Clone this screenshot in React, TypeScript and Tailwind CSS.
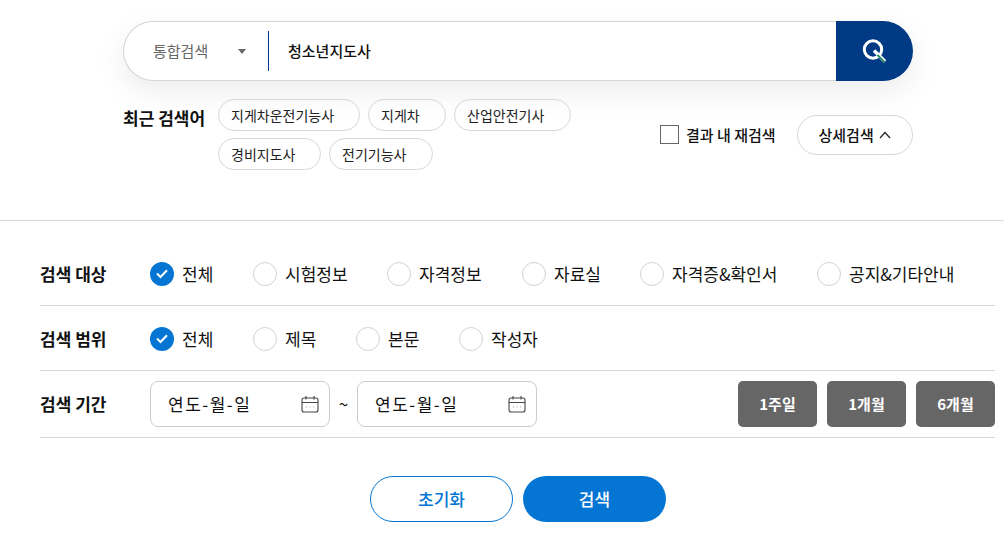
import React from 'react';

const FONT = "font-['Noto_Sans_CJK_KR','Noto_Sans',sans-serif]";

function CalendarIcon() {
  return (
    <svg width="18" height="18" viewBox="0 0 18 18" fill="none" stroke="#444" strokeWidth="1.1">
      <rect x="1" y="3" width="16" height="14" rx="2" />
      <path d="M1 7.5h16M5 1v3.5M13 1v3.5" />
      <path d="M5 12h1M8.5 12h1M12 12h1" stroke="#aaa" />
    </svg>
  );
}

function Radio({ label, checked = false, gapClass }: { label: string; checked?: boolean; gapClass: string }) {
  return (
    <div className={`flex items-center gap-[8px] ${gapClass}`}>
      {checked ? (
        <span className="flex h-6 w-6 items-center justify-center rounded-full bg-[#0475d2]">
          <svg width="14" height="11" viewBox="0 0 14 11" fill="none" stroke="#fff" strokeWidth="2">
            <path d="M2 5.5 5.5 9 12 2.2" />
          </svg>
        </span>
      ) : (
        <span className="h-6 w-6 rounded-full border border-[#d2d2d2] bg-white" />
      )}
      <span className="text-[17px] leading-6 text-[#111]">{label}</span>
    </div>
  );
}

function Tag({ label, w }: { label: string; w: string }) {
  return (
    <span className={`flex h-[32px] items-center rounded-full border border-[#d8d8d8] pl-[12px] text-[14px] text-[#222] ${w}`}>
      {label}
    </span>
  );
}

function DateBox() {
  return (
    <div className="flex h-[46px] w-[180px] items-center justify-between rounded-[8px] border border-[#cccccc] pl-[17px] pr-[10px]">
      <span className="text-[17px] tracking-[1.5px] text-[#111]">연도-월-일</span>
      <CalendarIcon />
    </div>
  );
}

function RangeBtn({ label }: { label: string }) {
  return (
    <span className="flex h-[46px] w-[79px] items-center justify-center rounded-[5px] bg-[#666666] text-[15px] font-bold text-white">
      {label}
    </span>
  );
}

export default function App() {
  return (
    <div className={`h-[539px] w-[1004px] overflow-hidden bg-white ${FONT}`}>
      {/* top search */}
      <div className="mx-[123px] w-[790px] pt-[21px]">
        <div className="flex h-[60px] rounded-full bg-white shadow-[0_10px_30px_rgba(0,0,0,0.08)]">
          <div className="flex flex-1 items-center rounded-l-full border-y border-l border-[#d4d4d4]">
            <div className="flex w-[144px] items-center pl-[29px]">
              <span className="text-[15px] text-[#666]">통합검색</span>
              <span className="ml-[30px] h-0 w-0 border-x-[4px] border-t-[5px] border-x-transparent border-t-[#666]" />
            </div>
            <span className="h-[40px] w-px bg-[#003a85]" />
            <span className="ml-[19px] text-[15px] font-medium text-[#111]">청소년지도사</span>
          </div>
          <div className="flex w-[77px] items-center justify-center rounded-r-full bg-[#003a85] pr-[2px]">
            <svg width="26" height="26" viewBox="0 0 26 26" fill="none">
              <circle cx="12" cy="11.5" r="8.7" stroke="#fff" strokeWidth="3" />
              <path d="M13 12.5 24 23.5" stroke="#fff" strokeWidth="3.6" />
              <path d="M16.5 17 23.5 24.2" stroke="#1f8a5f" strokeWidth="1.8" />
            </svg>
          </div>
        </div>

        <div className="mt-[18px] flex">
          <div className="pt-[7px] text-[17px] font-bold leading-[24px] text-[#111]">최근 검색어</div>
          <div className="ml-[13px] flex w-[360px] flex-wrap content-start gap-x-[8px] gap-y-[7px]">
            <Tag label="지게차운전기능사" w="w-[142px]" />
            <Tag label="지게차" w="w-[78px]" />
            <Tag label="산업안전기사" w="w-[117px]" />
            <Tag label="경비지도사" w="w-[103px]" />
            <Tag label="전기기능사" w="w-[104px]" />
          </div>
          <div className="ml-[82px] flex h-[56px] items-center pt-[16px]">
            <span className="mb-[2px] h-[19px] w-[19px] border border-[#666] bg-white" />
            <span className="ml-[7px] text-[15px] font-medium text-[#111]">결과 내 재검색</span>
            <span className="ml-[21px] flex h-[40px] w-[116px] items-center justify-center gap-[5px] rounded-full border border-[#d8d8d8] text-[15px] font-medium text-[#111]">
              상세검색
              <svg width="12" height="8" viewBox="0 0 12 8" fill="none" stroke="#222" strokeWidth="1.2">
                <path d="M1 7 6 1.5 11 7" />
              </svg>
            </span>
          </div>
        </div>
      </div>

      <div className="mt-[50px] border-t border-[#d8d8d8]" />

      {/* filters */}
      <div className="ml-[40px] mt-[20px] w-[955px]">
        <div className="flex h-[65px] items-center border-b border-[#d8d8d8] pt-[1px]">
          <div className="w-[110px] text-[17px] font-bold text-[#111]">검색 대상</div>
          <Radio label="전체" checked gapClass="w-[103px]" />
          <Radio label="시험정보" gapClass="w-[134px]" />
          <Radio label="자격정보" gapClass="w-[135px]" />
          <Radio label="자료실" gapClass="w-[118px]" />
          <Radio label="자격증&확인서" gapClass="w-[177px]" />
          <Radio label="공지&기타안내" gapClass="w-[140px]" />
        </div>
        <div className="flex h-[65px] items-center border-b border-[#d8d8d8] pt-[1px]">
          <div className="w-[110px] text-[17px] font-bold text-[#111]">검색 범위</div>
          <Radio label="전체" checked gapClass="w-[103px]" />
          <Radio label="제목" gapClass="w-[103px]" />
          <Radio label="본문" gapClass="w-[103px]" />
          <Radio label="작성자" gapClass="w-[90px]" />
        </div>
        <div className="flex h-[67px] items-center border-b border-[#d8d8d8]">
          <div className="w-[110px] text-[17px] font-bold text-[#111]">검색 기간</div>
          <DateBox />
          <span className="w-[27px] text-center text-[17px] text-[#111]">~</span>
          <DateBox />
          <div className="ml-auto flex gap-[10px]">
            <RangeBtn label="1주일" />
            <RangeBtn label="1개월" />
            <RangeBtn label="6개월" />
          </div>
        </div>
      </div>

      <div className="ml-[370px] mt-[38px] flex gap-[10px]">
        <span className="flex h-[46px] w-[143px] items-center justify-center rounded-full border border-[#0475d2] text-[17px] font-medium text-[#0475d2]">초기화</span>
        <span className="flex h-[46px] w-[143px] items-center justify-center rounded-full bg-[#0475d2] text-[17px] font-medium text-white">검색</span>
      </div>
    </div>
  );
}
